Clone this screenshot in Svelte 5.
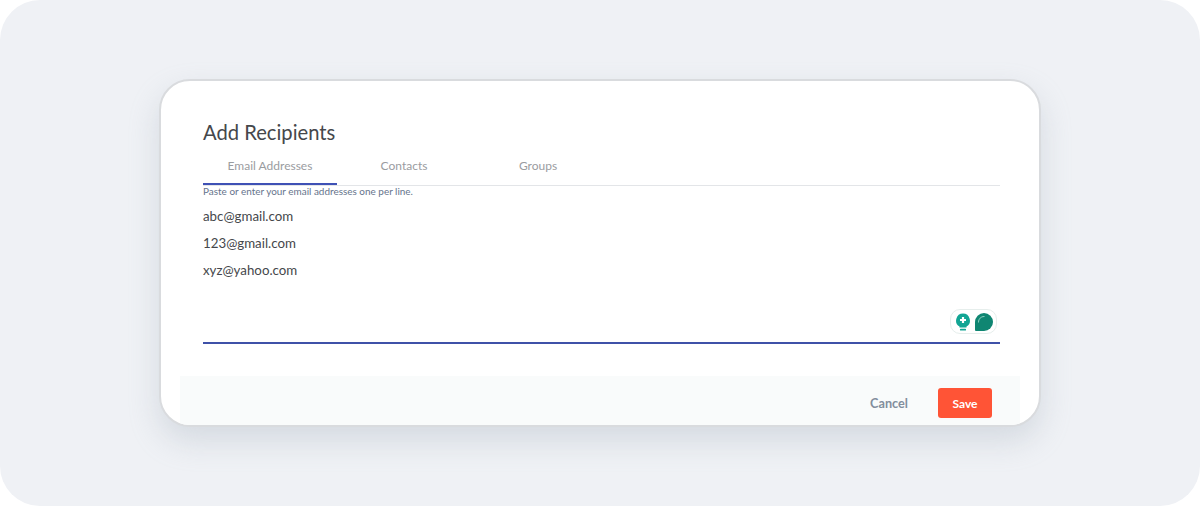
<script>
  const tabs = ['Email Addresses', 'Contacts', 'Groups'];
  const emails = ['abc@gmail.com', '123@gmail.com', 'xyz@yahoo.com'];
  let active = $state(0);
</script>

<div class="stage">
  <div class="modal">
    <div class="body">
      <h2>Add Recipients</h2>
      <div class="tabs">
        {#each tabs as tab, i}
          <button class="tab" class:active={i === active} onclick={() => (active = i)}>{tab}</button>
        {/each}
      </div>
      <p class="hint">Paste or enter your email addresses one per line.</p>
      <div class="field">
        {#each emails as email}
          <div class="email">{email}</div>
        {/each}
        <div class="widget">
          <svg width="16" height="18" viewBox="0 0 16 18">
            <path d="M8 .5a7 7 0 0 0-3.500 13V14.500h7v-1A7 7 0 0 0 8 .5z" fill="#12a594" />
            <path d="M8 4v6M5 7h6" stroke="#fff" stroke-width="2.200" />
            <path d="M5.800 16.700h4.400" stroke="#12a594" stroke-width="1.800" stroke-linecap="round" />
          </svg>
          <svg width="20" height="20" viewBox="0 0 20 20">
            <path d="M1 18V10a9 9 0 1 1 9 9H2a1 1 0 0 1-1-1z" fill="#0f8672" />
            <path d="M4.500 10.500V10A5.500 5.500 0 0 1 10 4.500h.5" fill="none" stroke="#8fcfc1" stroke-width="1" />
          </svg>
        </div>
      </div>
    </div>
    <div class="footer">
      <button class="cancel">Cancel</button>
      <button class="save">Save</button>
    </div>
  </div>
</div>

<style>
  :global(body) {
    background: #fff;
  }

  .stage {
    box-sizing: border-box;
    width: 1200px;
    height: 506px;
    padding: 79px 159px;
    background: #eff1f5;
    border-radius: 40px;
    font-family: Lato, sans-serif;
  }

  .modal {
    box-sizing: border-box;
    height: 348px;
    display: flex;
    flex-direction: column;
    background: #fff;
    border: 2px solid #d9dbde;
    border-radius: 31px;
    box-shadow: 0 14px 30px rgba(160, 170, 185, 0.32);
    overflow: hidden;
  }

  .body {
    flex: 1;
    padding: 38px 39px 0 42px;
  }

  h2 {
    margin: 0;
    font-size: 20.200px;
    line-height: 26px;
    font-weight: 400;
    color: #45474b;
  }

  .tabs {
    display: flex;
    height: 40px;
    border-bottom: 1px solid #e3e5e8;
  }

  .tab {
    width: 134px;
    height: 40px;
    padding: 2px 0 0;
    background: none;
    border: 0;
    border-bottom: 2px solid transparent;
    font: 12px Lato, sans-serif;
    color: #9a9c9f;
  }

  .tab.active {
    border-bottom-color: #3f51b5;
  }

  .hint {
    margin: 0;
    font-size: 9.950px;
    line-height: 11px;
    color: #66748c;
  }

  .field {
    position: relative;
    box-sizing: border-box;
    height: 147px;
    padding-top: 6px;
    border-bottom: 2px solid #3f51a8;
  }

  .email {
    font-size: 13.300px;
    line-height: 27px;
    color: #45474b;
  }

  .widget {
    position: absolute;
    right: 3px;
    bottom: 8px;
    display: flex;
    align-items: center;
    gap: 3px;
    height: 23px;
    padding: 0 2px 0 4px;
    background: #fff;
    border: 1px solid #e6eeec;
    border-radius: 10px;
  }

  .footer {
    display: flex;
    flex: none;
    justify-content: flex-end;
    align-items: flex-start;
    gap: 30px;
    height: 49px;
    margin: 0 19px;
    padding: 12px 28px 0 0;
    box-sizing: border-box;
    background: #f9fbfb;
  }

  .cancel {
    height: 30px;
    padding: 0;
    background: none;
    border: 0;
    font: 700 12.700px Lato, sans-serif;
    color: #828e9d;
  }

  .save {
    width: 54px;
    height: 30px;
    padding: 0;
    background: #ff5436;
    border: 0;
    border-radius: 3px;
    font: 700 12px Lato, sans-serif;
    color: #fff;
  }
</style>
